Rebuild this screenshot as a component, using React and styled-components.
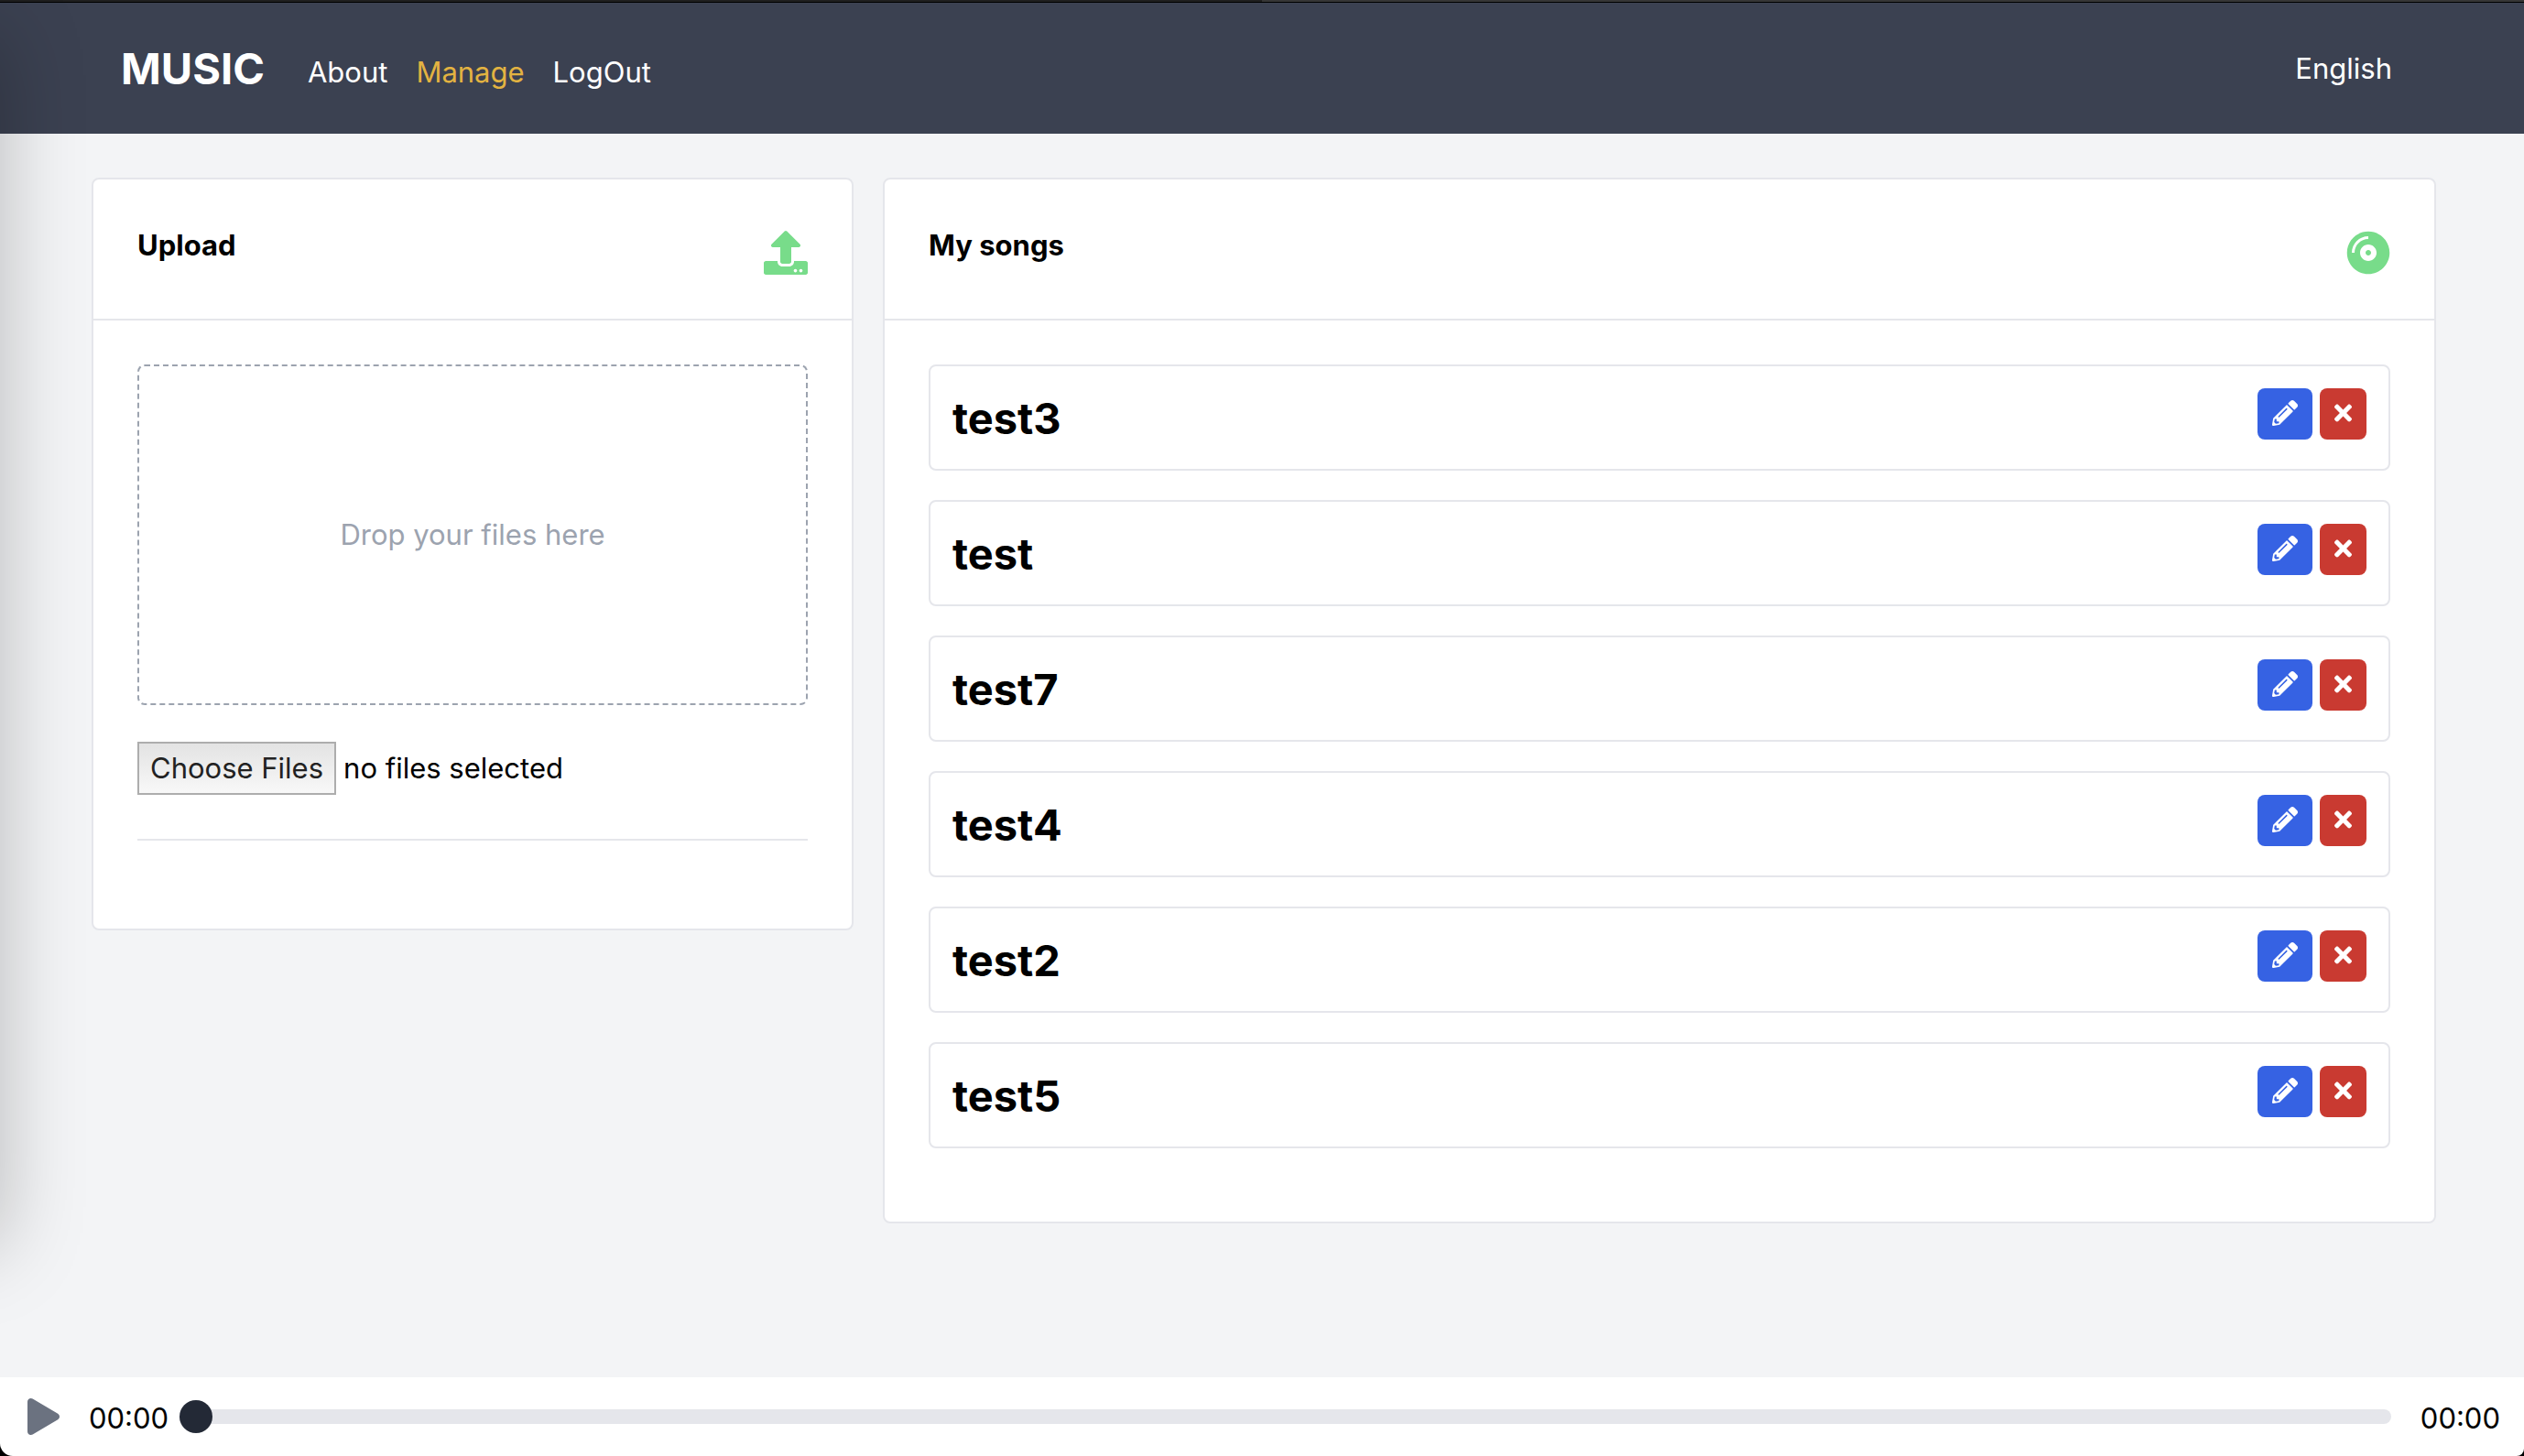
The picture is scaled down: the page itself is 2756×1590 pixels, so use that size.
import React, { useState } from "react";
import styled, { createGlobalStyle } from "styled-components";
import { FaCompactDisc, FaPencilAlt, FaPlay, FaTimes, FaUpload } from "react-icons/fa";

const GlobalStyle = createGlobalStyle`
  *, *::before, *::after { box-sizing: border-box; }
  body {
    margin: 0;
    background: #f3f4f6;
    color: #000;
    font-family: Inter, "Liberation Sans", sans-serif;
    font-size: 31px;
    line-height: 48px;
  }
  h1, h2, ul { margin: 0; padding: 0; }
  ul { list-style: none; }
  a { color: inherit; text-decoration: none; }
`;

const Page = styled.div`
  position: relative;
  display: flex;
  flex-direction: column;
  min-height: 100vh;
  overflow: hidden;
`;

const EdgeShadow = styled.div`
  position: absolute;
  top: 40px;
  bottom: 230px;
  left: -100px;
  width: 100px;
  box-shadow: 0 0 90px rgba(0, 0, 0, 0.25);
  pointer-events: none;
`;

const TopEdge = styled.div`
  height: 3px;
  border-bottom: 1px solid #000;
  background: linear-gradient(90deg, #1f1f1f 50%, #363636 50%);
`;

const Header = styled.header`
  display: flex;
  align-items: center;
  justify-content: space-between;
  height: 143px;
  padding: 0 144px 0 132px;
  background: #3b4151;
  color: #fff;
`;

const Nav = styled.nav`
  display: flex;
  align-items: center;
  gap: 31px;
`;

const Brand = styled.a`
  margin-right: 16px;
  font-size: 47px;
  font-weight: 700;
`;

const NavLink = styled.a`
  padding-top: 8px;
  color: ${(p) => (p.$active ? "#e3b341" : "#fff")};
`;

const Main = styled.main`
  display: grid;
  flex: 1;
  grid-template-columns: repeat(3, minmax(0, 1fr));
  align-items: start;
  gap: 32px;
  padding: 48px 96px 48px 100px;
`;

const Card = styled.section`
  grid-column: span ${(p) => p.$span};
  border: 2px solid #e5e6eb;
  border-radius: 8px;
  background: #fff;
`;

const CardHeader = styled.div`
  display: flex;
  justify-content: space-between;
  padding: 48px;
  border-bottom: 2px solid #e5e6eb;

  svg {
    height: 48px;
    width: 48px;
    margin-top: 8px;
    color: #78dc8a;
  }
`;

const CardTitle = styled.h2`
  font-size: 31px;
  font-weight: 700;
`;

const CardBody = styled.div`
  padding: 48px;
`;

const DropZone = styled.div`
  padding: 160px 40px;
  border: 2px dashed #9ca3af;
  border-radius: 8px;
  color: #9ca3af;
  text-align: center;
`;

const FileRow = styled.label`
  display: flex;
  align-items: center;
  gap: 8px;
  margin-top: 40px;
`;

const HiddenFile = styled.input`
  position: absolute;
  width: 1px;
  height: 1px;
  opacity: 0;
`;

const FileButton = styled.span`
  padding: 3px 12px;
  border: 2px solid #adadad;
  background: linear-gradient(#e3e3e3, #f8f8f8);
  color: #222;
`;

const Divider = styled.hr`
  height: 2px;
  margin: 48px 0;
  border: 0;
  background: #e5e6eb;
`;

const Song = styled.li`
  display: flex;
  align-items: flex-start;
  justify-content: space-between;
  margin-bottom: 32px;
  padding: 24px 24px 22px;
  border: 2px solid #e5e6eb;
  border-radius: 8px;
`;

const SongName = styled.span`
  font-size: 47px;
  font-weight: 700;
  line-height: 66px;
`;

const Actions = styled.div`
  display: flex;
  gap: 8px;
`;

const ActionButton = styled.button`
  display: flex;
  padding: 13px 16px 15px;
  border: 0;
  border-radius: 8px;
  background: ${(p) => (p.$danger ? "#c93a31" : "#3662e3")};
  color: #fff;

  svg {
    width: ${(p) => (p.$danger ? 19 : 28)}px;
    height: 28px;
  }
`;

const PlayerFrame = styled.div`
  background: linear-gradient(#f3f4f6 50%, #000 50%);
`;

const Player = styled.footer`
  display: flex;
  align-items: center;
  height: 86px;
  padding: 0 26px 0 30px;
  border-radius: 0 0 8px 14px;
  background: #fff;
`;

const PlayButton = styled.button`
  display: flex;
  width: 67px;
  padding: 0;
  border: 0;
  background: none;

  svg {
    width: 35px;
    height: 40px;
    color: #6b7280;
  }
`;

const Time = styled.span`
  padding-top: 3px;
  white-space: nowrap;
`;

const Seek = styled.input`
  flex: 1;
  min-width: 0;
  height: 16px;
  margin: 0 32px 0 12px;
  appearance: none;
  border-radius: 8px;
  background: #e5e6eb;

  &::-webkit-slider-thumb {
    appearance: none;
    width: 36px;
    height: 36px;
    border-radius: 50%;
    background: #232936;
  }
`;

const songs = ["test3", "test", "test7", "test4", "test2", "test5"];

export default function App() {
  const [position, setPosition] = useState(0);
  return (
    <Page>
      <GlobalStyle />
      <TopEdge />
      <Header>
        <Nav>
          <Brand href="#">MUSIC</Brand>
          <NavLink href="#about">About</NavLink>
          <NavLink href="#manage" $active>Manage</NavLink>
          <NavLink href="#logout">LogOut</NavLink>
        </Nav>
        <a href="#locale">English</a>
      </Header>
      <Main>
        <Card $span={1}>
          <CardHeader>
            <CardTitle>Upload</CardTitle>
            <FaUpload />
          </CardHeader>
          <CardBody>
            <DropZone>Drop your files here</DropZone>
            <FileRow>
              <HiddenFile type="file" multiple />
              <FileButton>Choose Files</FileButton>
              <span>no files selected</span>
            </FileRow>
            <Divider />
          </CardBody>
        </Card>
        <Card $span={2}>
          <CardHeader>
            <CardTitle>My songs</CardTitle>
            <FaCompactDisc />
          </CardHeader>
          <CardBody as="ul">
            {songs.map((name) => (
              <Song key={name}>
                <SongName>{name}</SongName>
                <Actions>
                  <ActionButton aria-label={`Edit ${name}`}>
                    <FaPencilAlt />
                  </ActionButton>
                  <ActionButton aria-label={`Delete ${name}`} $danger>
                    <FaTimes />
                  </ActionButton>
                </Actions>
              </Song>
            ))}
          </CardBody>
        </Card>
      </Main>
      <PlayerFrame>
        <Player>
          <PlayButton aria-label="Play">
            <FaPlay />
          </PlayButton>
          <Time>00:00</Time>
          <Seek
            type="range"
            min="0"
            max="100"
            value={position}
            aria-label="Seek"
            onChange={(e) => setPosition(Number(e.target.value))}
          />
          <Time>00:00</Time>
        </Player>
      </PlayerFrame>
      <EdgeShadow />
    </Page>
  );
}
